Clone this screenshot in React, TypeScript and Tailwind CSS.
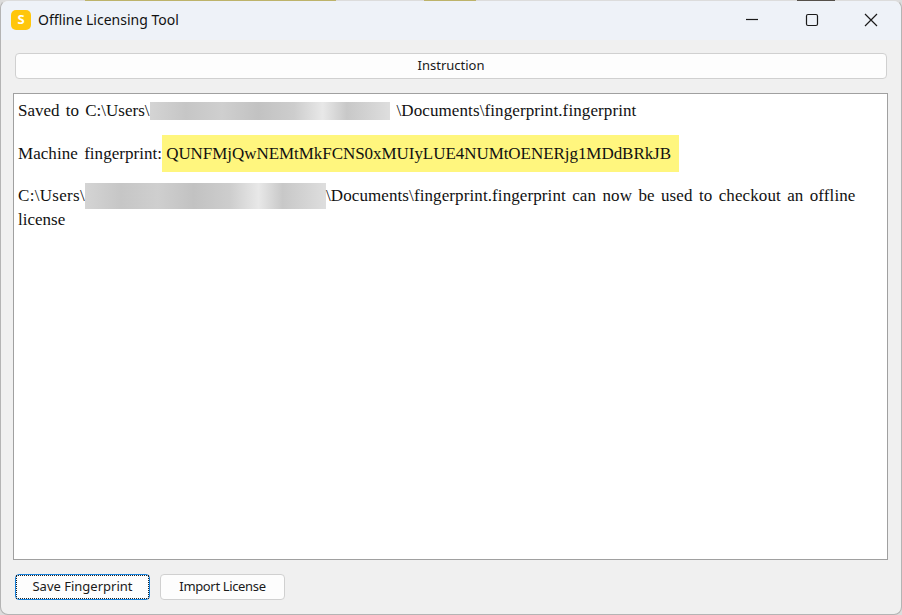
import React from "react";

function Blur({ w, h }: { w: string; h: string }) {
  return (
    <span
      className={`inline-block shrink-0 ${w} ${h} bg-[linear-gradient(90deg,#d4d4d4_0%,#c6c6c6_15%,#cfcfcf_30%,#c2c2c2_45%,#cdcdcd_60%,#e8e8e8_72%,#c8c8c8_82%,#d4d4d4_92%,#dedede_100%)]`}
    />
  );
}

function Btn({ label, cls }: { label: string; cls: string }) {
  return (
    <button
      className={`flex h-[26px] items-center justify-center rounded-[4px] border border-[#d0d0d0] bg-[#fdfdfd] text-[13px] text-[#1a1a1a] ${cls}`}
    >
      {label}
    </button>
  );
}

export default function App() {
  return (
    <div className="relative h-[615px] w-[902px] overflow-hidden bg-[#dcdcdc] font-['Noto_Sans',sans-serif]">
      <div className="absolute left-[85px] top-0 h-[1px] w-[251px] bg-[#bdb36a]" />
      <div className="absolute left-[424px] top-0 h-[1px] w-[52px] bg-[#bdb36a]" />
      <div className="absolute left-[797px] top-0 h-[1px] w-[38px] bg-[#55504a]" />
      <div className="flex h-full w-full flex-col rounded-[8px] border border-[#b4b4b4] border-t-transparent bg-[#f0f0f0] bg-clip-padding">
        <div className="flex h-[39px] shrink-0 items-center rounded-t-[8px] bg-[#eef2f8] pb-[2px] pl-[10px]">
          <div className="flex size-[20px] items-center justify-center rounded-[5px] bg-[#ffc60b] text-[13px] font-bold text-white">
            S
          </div>
          <span className="ml-[7px] text-[14px] text-[#111]">Offline Licensing Tool</span>
          <div className="ml-auto flex items-center text-[#1a1a1a]">
            <div className="flex h-[37px] w-[60px] items-center justify-center pr-[2px]">
              <svg width="14" height="14" viewBox="0 0 14 14" fill="none" stroke="currentColor" strokeWidth="1.2">
                <path d="M1 6.5h12" />
              </svg>
            </div>
            <div className="flex h-[37px] w-[58px] items-center justify-center">
              <svg width="14" height="14" viewBox="0 0 14 14" fill="none" stroke="currentColor" strokeWidth="1.2">
                <rect x="1.5" y="1.5" width="11" height="11" rx="1.5" />
              </svg>
            </div>
            <div className="flex h-[37px] w-[60px] items-center justify-center">
              <svg width="14" height="14" viewBox="0 0 14 14" fill="none" stroke="currentColor" strokeWidth="1.2">
                <path d="M1 1l12 12M13 1L1 13" />
              </svg>
            </div>
          </div>
        </div>

        <div className="flex min-h-0 flex-1 flex-col pb-[14px] pl-[12px] pr-[13px]">
          <div className="mt-[13px] pl-[2px] pr-[1px]">
            <Btn label="Instruction" cls="w-full" />
          </div>

          <div className="mt-[14px] min-h-0 flex-1 border border-[#a0a0a0] bg-white pl-[4px] pt-[5px] font-['Liberation_Serif','Times_New_Roman',serif] text-[17px] leading-[24px] text-[#111] [word-spacing:2px]">
            <p className="flex h-[24px] items-center whitespace-pre">
              Saved to C:\Users\<Blur w="w-[240px]" h="h-[18px]" />
              <span className="ml-[7px] tracking-[0.1px]">\Documents\fingerprint.fingerprint</span>
            </p>
            <p className="mt-[12px] flex h-[37px] items-center whitespace-pre">
              <span className="tracking-[0.05px]">Machine fingerprint:</span>
              <span className="flex h-[37px] items-center bg-[#fff67e] pl-[4px] pr-[8px] tracking-[-0.05px]">
                QUNFMjQwNEMtMkFCNS0xMUIyLUE4NUMtOENERjg1MDdBRkJB
              </span>
            </p>
            <p className="mt-[12px] flex h-[24px] items-center whitespace-pre">
              <span className="tracking-[0.3px]">C:\Users\</span>
              <Blur w="w-[241px]" h="h-[26px]" />
              <span className="tracking-[0.1px]">\Documents\fingerprint.fingerprint can now be used to checkout an offline</span>
            </p>
            <p className="h-[24px]">license</p>
          </div>

          <div className="mt-[14px] flex gap-[10px] pl-[2px]">
            <button className="relative flex h-[26px] w-[135px] items-center justify-center rounded-[4px] border-[1.5px] border-[#1480dc] bg-[#fdfdfd] text-[13px] text-[#1a1a1a]">
              <span className="absolute inset-0 border border-dotted border-[#222]" />
              Save Fingerprint
            </button>
            <Btn label="Import License" cls="w-[125px] tracking-[-0.35px]" />
          </div>
        </div>
      </div>
    </div>
  );
}
